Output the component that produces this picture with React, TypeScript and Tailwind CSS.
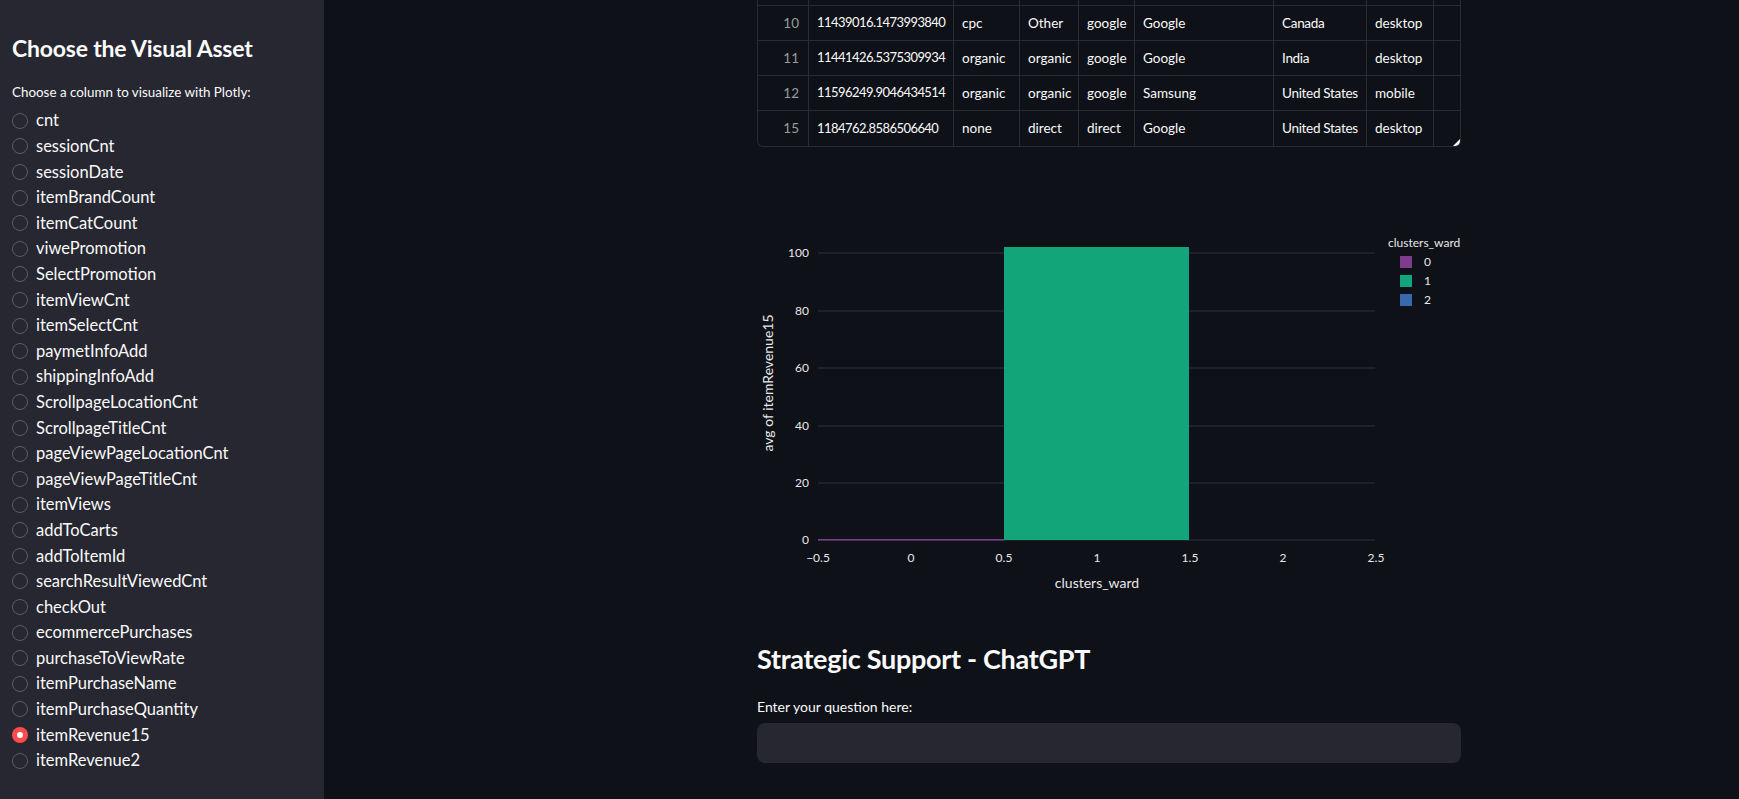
import React from 'react'

const columns = [
  'cnt', 'sessionCnt', 'sessionDate', 'itemBrandCount', 'itemCatCount', 'viwePromotion',
  'SelectPromotion', 'itemViewCnt', 'itemSelectCnt', 'paymetInfoAdd', 'shippingInfoAdd',
  'ScrollpageLocationCnt', 'ScrollpageTitleCnt', 'pageViewPageLocationCnt', 'pageViewPageTitleCnt',
  'itemViews', 'addToCarts', 'addToItemId', 'searchResultViewedCnt', 'checkOut',
  'ecommercePurchases', 'purchaseToViewRate', 'itemPurchaseName', 'itemPurchaseQuantity',
  'itemRevenue15', 'itemRevenue2',
]

const rows = [
  ['10', '11439016.1473993840', 'cpc', 'Other', 'google', 'Google', 'Canada', 'desktop'],
  ['11', '11441426.5375309934', 'organic', 'organic', 'google', 'Google', 'India', 'desktop'],
  ['12', '11596249.9046434514', 'organic', 'organic', 'google', 'Samsung', 'United States', 'mobile'],
  ['15', '1184762.8586506640', 'none', 'direct', 'direct', 'Google', 'United States', 'desktop'],
]

const gridCols = 'grid grid-cols-[51px_145px_66px_59px_56px_139px_93px_67px_26px]'

function Radio({ label, checked }: { label: string; checked?: boolean }) {
  return (
    <div className="flex items-center h-[25.6px]">
      {checked ? (
        <span className="w-4 h-4 rounded-full bg-[#ff4b4b] flex items-center justify-center">
          <span className="w-[6px] h-[6px] rounded-full bg-white" />
        </span>
      ) : (
        <span className="w-4 h-4 rounded-full border border-[#5b5c64]" />
      )}
      <span className="ml-2 text-[16.5px] text-[#fafafa]">{label}</span>
    </div>
  )
}

function DataTable() {
  return (
    <div className="relative border-x border-b border-[#2a2c33] rounded-b-md overflow-hidden text-[13.5px] text-[#fafafa]">
      <div className={`${gridCols} h-[6px] border-b border-[#2a2c33]`}>
        {Array.from({ length: 9 }).map((_, i) => (
          <div key={i} className={i < 8 ? 'border-r border-[#2a2c33]' : ''} />
        ))}
      </div>
      {rows.map((r, ri) => (
        <div key={r[0]} className={`${gridCols} h-[35px] ${ri < rows.length - 1 ? 'border-b border-[#2a2c33]' : ''}`}>
          {r.map((c, i) => (
            <div
              key={i}
              className={`flex items-center border-r border-[#2a2c33] whitespace-nowrap overflow-hidden ${
                i === 0
                  ? 'justify-end pr-[9px] text-[#9a9ba1]'
                  : i === 1
                  ? 'pl-[8px] text-[13px] tracking-[-0.55px]'
                  : i === 6
                  ? 'pl-[8px] tracking-[-0.3px]'
                  : 'pl-[8px]'
              }`}
            >
              {c}
            </div>
          ))}
          <div />
        </div>
      ))}
      <svg className="absolute right-0 bottom-0" width="7" height="7" viewBox="0 0 7 7">
        <polygon points="7,0 7,7 0,7" fill="#fafafa" />
      </svg>
    </div>
  )
}

function BarChart() {
  const gridY = [52, 110, 167, 225, 282, 339]
  const yLabels = ['100', '80', '60', '40', '20', '0']
  const xTicks = [
    ['−0.5', 61], ['0', 154], ['0.5', 247], ['1', 340], ['1.5', 433], ['2', 526], ['2.5', 619],
  ] as const
  return (
    <svg width="780" height="400" className="block overflow-visible" style={{ fontFamily: 'Lato, sans-serif' }}>
      {gridY.map((y, i) => (
        <g key={y}>
          <line x1="61" x2="618" y1={y} y2={y} stroke="#30323a" strokeWidth="1" />
          <text x="52" y={y + 4} textAnchor="end" fontSize="12" fill="#e8e8ea">{yLabels[i]}</text>
        </g>
      ))}
      <rect x="247" y="46" width="185" height="293" fill="#11A579" />
      <rect x="61" y="338" width="186" height="1.5" fill="#7F3C8D" />
      {xTicks.map(([t, x]) => (
        <text key={t} x={x} y="361" textAnchor="middle" fontSize="12" fill="#e8e8ea">{t}</text>
      ))}
      <text x="340" y="387" textAnchor="middle" fontSize="14" fill="#e8e8ea">clusters_ward</text>
      <text
        x="0"
        y="0"
        transform="translate(16 182) rotate(-90)"
        textAnchor="middle"
        fontSize="14"
        fill="#e8e8ea"
      >
        avg of itemRevenue15
      </text>
      <text x="631" y="46" fontSize="12" fill="#e8e8ea">clusters_ward</text>
      {[
        ['0', '#7F3C8D', 61],
        ['1', '#11A579', 80],
        ['2', '#3969AC', 99],
      ].map(([l, c, y]) => (
        <g key={l as string}>
          <rect x="643" y={(y as number) - 6} width="12" height="12" fill={c as string} />
          <text x="667" y={(y as number) + 4} fontSize="12" fill="#e8e8ea">{l}</text>
        </g>
      ))}
    </svg>
  )
}

export default function App() {
  return (
    <div className="flex w-full h-[799px] overflow-hidden bg-[#0e1117] text-[#fafafa] font-['Lato',sans-serif]">
      <aside className="w-[324px] shrink-0 h-full bg-[#262730] pl-3 pt-[32px]">
        <h2 className="text-[23px] font-bold leading-[32px] tracking-[-0.2px]">Choose the Visual Asset</h2>
        <p className="mt-[20px] text-[13.4px] leading-[16px]">Choose a column to visualize with Plotly:</p>
        <div className="mt-[8px]">
          {columns.map((c) => (
            <Radio key={c} label={c} checked={c === 'itemRevenue15'} />
          ))}
        </div>
      </aside>
      <main className="flex-1 pl-[433px]">
        <div className="w-[704px]">
          <DataTable />
          <div className="mt-[54px]">
            <BarChart />
          </div>
          <h2 className="mt-[40px] text-[27px] font-bold leading-[36px] tracking-[-0.3px]">Strategic Support - ChatGPT</h2>
          <p className="mt-[22px] text-[14px] leading-[16px]">Enter your question here:</p>
          <div className="mt-[8px] h-[40px] rounded-lg bg-[#262730]" />
        </div>
      </main>
    </div>
  )
}
